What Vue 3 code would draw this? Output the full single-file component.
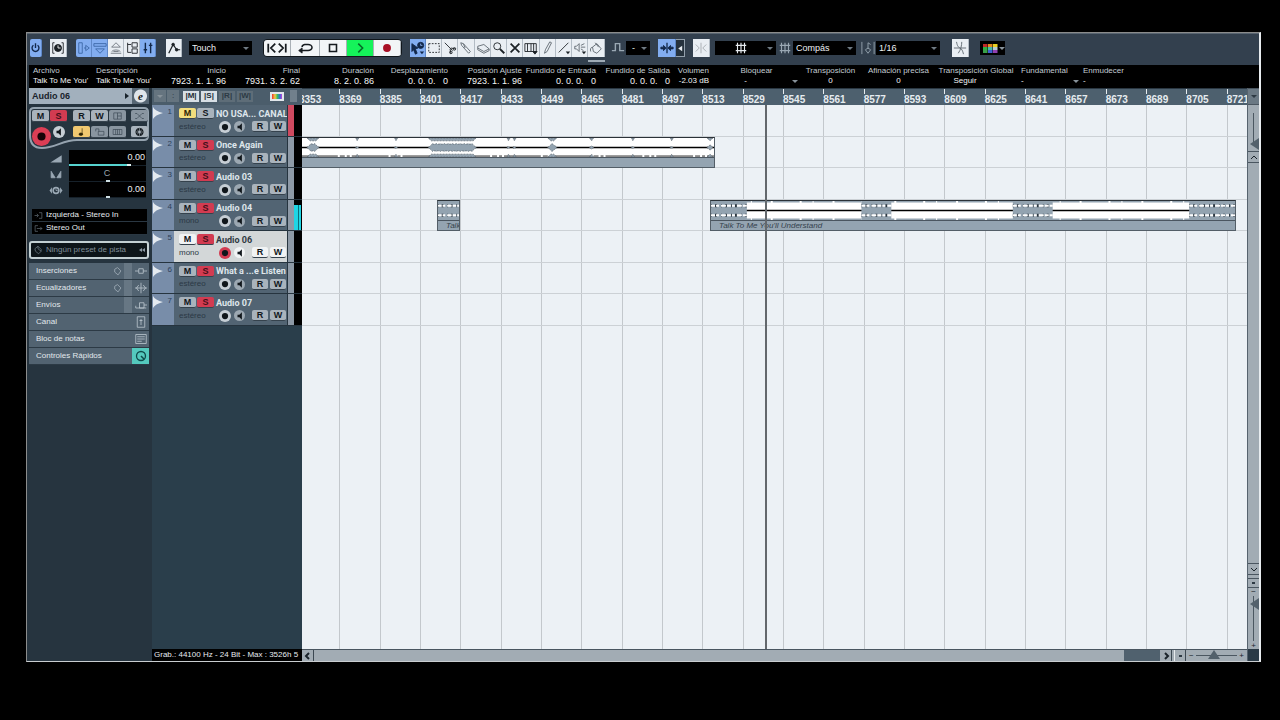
<script setup>
const icons = {
  power: '<path d="M5 4a5 5 0 1 0 6 0M8 1v7" stroke-width="2"/>',
  clock: '<path d="M4 2H2v12h2M12 2h2v12h-2"/><circle cx="8" cy="8" r="4" fill="currentColor"/><path d="M8 5v3h3" stroke="#fff"/>',
  inspector: '<path d="M2 2h4v12H2zM8 8h2M10 5v6l4-3z" stroke="#3a66a5"/>',
  infoLine: '<path d="M1 3h14v3H1zM3 9h10l-5 5z" stroke="#3a66a5"/>',
  overview: '<path d="M3 7l5-5 5 5zM3 12a6 4 0 0 1 10 0M2 14h12M5 12h6" stroke="#6b747b"/>',
  pool: '<path d="M3 2v11h4M3 4h4M8 2h6v5H8zM8 9h6v5H8z"/>',
  mixer: '<path d="M5 2v12M11 2v12M3 10h4M9 5h4" stroke-width="1.6"/>',
  automation: '<path d="M2 14L7 4l4 6h4" stroke-width="1.4"/><circle cx="7" cy="4" r="1.500" fill="currentColor"/><circle cx="11" cy="10" r="1.500" fill="currentColor"/>',
  locate: '<path d="M2 3v10M10 3L5 8l5 5M14 3l5 5-5 5M22 3v10" stroke-width="2"/>',
  loop: '<path d="M4 11h9a4 3 0 0 0 0-7H9a4 3 0 0 0-3 3" stroke-width="1.800"/><path d="M2 11l4-3v6z" fill="currentColor"/>',
  stop: '<path d="M4 4h8v8H4z" stroke-width="1.8"/>',
  play: '<path d="M6 3l5 5-5 5" stroke-width="1.8"/>',
  record: '<circle cx="8" cy="8" r="4.500" fill="#a80f25" stroke="none"/>',
  arrow: '<path d="M1 3l7 5-3 1 2 5-2 1-2-5-2 2z" fill="currentColor"/><circle cx="11" cy="5" r="3.500" fill="currentColor"/><path d="M11 3v2h2" stroke="#8ab0ee"/><path d="M10 12h5l-2.500 3z" fill="currentColor" stroke="none"/>',
  range: '<path d="M2 3h12v10H2z" stroke-dasharray="2 1.500"/>',
  split: '<path d="M2 2l9 9M9 8l5 1M8 9l1 5"/><circle cx="13" cy="9" r="1.500"/><circle cx="9" cy="13" r="1.500"/>',
  glue: '<path d="M2 2l3 1 8 9-2 2-8-9zM5 3l2 5" stroke="#5b656d"/>',
  erase: '<path d="M2 6l7-2 6 5-6 3-7-4zM2 8v2l7 4 6-3V9" stroke="#5b656d"/>',
  zoom: '<circle cx="6" cy="6" r="4"/><path d="M9 9l5 5" stroke-width="2.200"/>',
  mute: '<path d="M3 3l10 10M13 3L3 13" stroke-width="2"/>',
  comp: '<path d="M1 3h13v9H1zM4 3v9M8 3v9M11 3v9"/><path d="M10 12h5l-2.500 3z" fill="currentColor"/>',
  draw: '<path d="M10 1l2 1-5 10-3 2 1-4z" stroke="#5b656d"/>',
  line: '<path d="M2 13L13 2"/><path d="M10 12h5l-2.500 3z" fill="currentColor" stroke="none"/>',
  listen: '<path d="M2 6h2l3-3v9L4 9H2zM9 5l4-2M9 7h5M9 9l3 2" stroke="#5b656d"/><path d="M10 12h5l-2.500 3z" fill="currentColor" stroke="none"/>',
  paint: '<path d="M4 7l5-4 5 6-5 5-4-2zM4 7c-2 0-3 3-2 5M7 2l4 5" stroke="#5b656d"/>',
  zeroCross: '<path d="M1 11h4V3h5v8h5" stroke-width="1.600"/>',
  autoScroll: '<path d="M8 2v12" stroke-width="1.500"/><path d="M1 7h3V5l3 3-3 3V9H1zM15 7h-3V5L9 8l3 3V9h3z" fill="currentColor"/>',
  leftTri: '<path d="M11 3v10L4 8z" fill="currentColor" stroke="none"/>',
  snap: '<path d="M8 2v12M2 4l4 4-4 4M14 4l-4 4 4 4"/>',
  grid: '<path d="M4 2v12M8 2v12M12 2v12M2 5h12M2 11h12" stroke-width="1.300"/>',
  quant: '<path d="M1 1v14M15 1v14M8 2v7M8 2l3 2M5 10l3-2 3 2-3 4z"/>',
  cross: '<path d="M1 8h14M4 1c1 5 2 6 4 7s3 3 4 7M10 1c0 4-1 9-4 13"/>',
  monitor: '<path d="M4 6h3l4-4v12L7 10H4z" fill="currentColor" stroke="none"/>',
  dot: '<circle cx="8" cy="8" r="5" fill="currentColor" stroke="none"/>',
  note: '<path d="M9 2v9"/><ellipse cx="7" cy="11.500" rx="3" ry="2" fill="currentColor"/>',
  lock: '<path d="M6 7h9v6H6zM7 7V3H2v4"/>',
  lanes: '<path d="M1 4h14v8H1zM5 4v8M8 4v8M11 4v8"/>',
  freeze: '<circle cx="8" cy="8" r="6" fill="currentColor"/><path d="M8 2v12M2 8h12M4 4l8 8M12 4l-8 8" stroke="#a9b3bc"/><circle cx="8" cy="8" r="2" fill="#a9b3bc" stroke="none"/>',
  edit: '<path d="M2 3h12v10H2zM8 3v10M8 8h6"/>',
  fades: '<path d="M1 4h3l8 8h3M1 12h3l8-8h3"/>',
  volume: '<path d="M1 13L15 4v9z" fill="currentColor" stroke="none"/>',
  pan: '<path d="M2 4l5 8H2zM14 4L9 12h5z" fill="currentColor"/>',
  delay: '<path d="M0 8l3-4v8zM16 8l-3-4v8z" fill="currentColor" stroke="none"/><circle cx="8" cy="8" r="3.500" stroke-width="2"/><path d="M8 6v2h2"/>',
  input: '<path d="M1 8h6M5 5l3 3-3 3M9 3h5v10H9"/>',
  output: '<path d="M7 3H2v10h5M5 8h9M11 5l3 3-3 3"/>',
  preset: '<path d="M8 2l5 5v3l-4 4-5-4-1-4z"/><path d="M8 2v4l5 4"/>',
  bypass: '<path d="M8 1l6 6-5 7-6-5V4z" stroke-width="1.500"/>',
  inserts: '<path d="M0 8h5M11 8h5M5 5h6v6H5z"/>',
  eq: '<path d="M0 8h16M8 1v14M5 4L2 8l3 4M11 4l3 4-3 4"/>',
  sends: '<path d="M1 12h14M6 5h6v7H6zM1 12V9M12 8h4"/>',
  channel: '<path d="M3 1h10v14H3zM8 4v8M6 6h4"/>',
  notes: '<path d="M1 2h14v12H1zM3 5h10M3 8h10M3 11h6"/>',
  quick: '<circle cx="8" cy="8" r="6" stroke-width="1.800"/><path d="M8 8l4 4" stroke-width="2"/>'
}

const views = [
  { icon: 'inspector', label: 'Inspector', on: true },
  { icon: 'infoLine', label: 'Línea de información', on: true },
  { icon: 'overview', label: 'Vista general' },
  { icon: 'pool', label: 'Pool' },
  { icon: 'mixer', label: 'Mezclador', on: true }
]
const transport = [
  { icon: 'locate', label: 'Localizadores', cls: 'locate', box: '0 0 24 16' },
  { icon: 'loop', label: 'Ciclo', cls: 'wide', box: '0 0 20 16' },
  { icon: 'stop', label: 'Parar' },
  { icon: 'play', label: 'Reproducir', cls: 'play' },
  { icon: 'record', label: 'Grabar' }
]
const tools = ['arrow', 'range', 'split', 'glue', 'erase', 'zoom', 'mute', 'comp', 'draw', 'line', 'listen', 'paint']
const palette = ['#c02828', '#e08a20', '#e8d020', '#30b040', '#48b8a8', '#b8c8d0', '#38a048', '#4060d0', '#9040b0']

const info = [
  { label: 'Archivo', value: "Talk To Me You'", cls: 'file' },
  { label: 'Descripción', value: "Talk To Me You'", cls: 'desc' },
  { label: 'Inicio', value: '7923. 1. 1. 96', cls: 'num' },
  { label: 'Final', value: '7931. 3. 2. 62', cls: 'num' },
  { label: 'Duración', value: '8. 2. 0. 86', cls: 'num' },
  { label: 'Desplazamiento', value: '0. 0. 0.   0', cls: 'num' },
  { label: 'Posición Ajuste', value: '7923. 1. 1. 96', cls: 'num' },
  { label: 'Fundido de Entrada', value: '0. 0. 0.   0', cls: 'num' },
  { label: 'Fundido de Salida', value: '0. 0. 0.   0', cls: 'num' },
  { label: 'Volumen', value: '-2.03 dB', cls: 'vol' },
  { label: 'Bloquear', value: '-', cls: 'block', menu: true },
  { label: 'Transposición', value: '0', cls: 'transp' },
  { label: 'Afinación precisa', value: '0', cls: 'tune' },
  { label: 'Transposición Global', value: 'Seguir', cls: 'global' },
  { label: 'Fundamental', value: '-', cls: 'root', menu: true },
  { label: 'Enmudecer', value: '-', cls: 'muted' }
]

const tracks = [
  { name: 'NO USA... CANAL', mode: 'estéreo', mute: true, solo: false, tag: true },
  { name: 'Once Again', mode: 'estéreo', solo: true },
  { name: 'Audio 03', mode: 'estéreo', solo: true },
  { name: 'Audio 04', mode: 'mono', solo: true, meter: true },
  { name: 'Audio 06', mode: 'mono', solo: true, selected: true },
  { name: 'What a ...e Listen', mode: 'estéreo', solo: true },
  { name: 'Audio 07', mode: 'estéreo', solo: true }
]

const sections = [
  { name: 'Inserciones', icon: 'inserts', bypass: true, split: true },
  { name: 'Ecualizadores', icon: 'eq', bypass: true, split: true },
  { name: 'Envíos', icon: 'sends', split: true },
  { name: 'Canal', icon: 'channel' },
  { name: 'Bloc de notas', icon: 'notes' },
  { name: 'Controles Rápidos', icon: 'quick', on: true }
]

const bars = Array.from({ length: 24 }, (_, i) => 8353 + i * 16)
const SPAN = 945
const clips = [
  { row: 1, start: -2, length: 415, name: '', loud: [[6, 12], [55, 3], [94, 3], [128, 48], [207, 3], [213, 3], [248, 9], [290, 4], [332, 3], [371, 3], [408, 6]] },
  { row: 3, start: 135, length: 23, name: 'Talk To Me You\'ll Understand', loud: [[0, 23]], dense: true },
  { row: 3, start: 408, length: 526, name: 'Talk To Me You\'ll Understand', loud: [[0, 36], [151, 30], [303, 40], [480, 46]], dense: true }
]
const clipStyle = c => ({
  left: (c.start / SPAN) * 100 + '%',
  width: (c.length / SPAN) * 100 + '%',
  top: (c.row / 7) * 100 + '%'
})
function bump(c, [x, w]) {
  if (c.dense) return `M${x} 0H${x + w}V20H${x}Z`
  let top = ''
  let bottom = ''
  for (let i = 0; i <= w; i++) {
    const edge = Math.min(i, w - i, 4)
    const h = edge * 0.9 + (i % 4 ? 0 : 0.5)
    top += `L${x + i} ${10 - h}`
    bottom = `L${x + i} ${10 + h}` + bottom
  }
  const inner = Math.max(w - 6, 0)
  const side = (w - inner) / 2
  return `M${x} 10${top}${bottom}Z M${x} 0h${w}l-${side} 3h-${inner}z M${x} 20h${w}l-${side}-3h-${inner}z`
}
const dashes = (x, w) => `M${x} 5h${w}M${x} 15h${w}`
</script>

<template>
  <main class="screen">
    <div class="window">
      <header class="toolbar">
        <button class="tb slim on" aria-label="Activar proyecto"><svg viewBox="0 0 16 16" v-html="icons.power"></svg></button>
        <button class="tb clock" aria-label="Compensación de retardo"><svg viewBox="0 0 16 16" v-html="icons.clock"></svg></button>
        <div class="group views">
          <button v-for="v in views" :key="v.icon" class="tb" :class="{ on: v.on }" :aria-label="v.label"><svg viewBox="0 0 16 16" v-html="icons[v.icon]"></svg></button>
        </div>
        <button class="tb auto" aria-label="Automatización"><svg viewBox="0 0 16 16" v-html="icons.automation"></svg></button>
        <div class="pick touch"><select aria-label="Modo de automatización"><option>Touch</option></select></div>
        <div class="transport">
          <button v-for="t in transport" :key="t.icon" :class="t.cls" :aria-label="t.label"><svg :viewBox="t.box || '0 0 16 16'" v-html="icons[t.icon]"></svg></button>
        </div>
        <div class="group tools">
          <button v-for="(t, i) in tools" :key="t" class="tb" :class="{ on: i === 0, current: t === 'paint' }" :aria-label="t"><svg viewBox="0 0 16 16" v-html="icons[t]"></svg></button>
        </div>
        <svg class="deco zero" viewBox="0 0 16 16" v-html="icons.zeroCross"></svg>
        <div class="pick mini"><select aria-label="Color"><option>-</option></select></div>
        <button class="tb scroll on" aria-label="Desplazamiento automático"><svg viewBox="0 0 16 16" v-html="icons.autoScroll"></svg></button>
        <button class="tb suspend" aria-label="Suspender desplazamiento"><svg viewBox="0 0 16 16" v-html="icons.leftTri"></svg></button>
        <button class="tb snap" aria-label="Ajuste"><svg viewBox="0 0 16 16" v-html="icons.snap"></svg></button>
        <div class="pick gridtype"><svg class="deco inside" viewBox="0 0 16 16" v-html="icons.grid"></svg><select aria-label="Tipo de ajuste"><option></option></select></div>
        <svg class="deco gridicon" viewBox="0 0 16 16" v-html="icons.grid"></svg>
        <div class="pick compas"><select aria-label="Tipo de rejilla"><option>Compás</option></select></div>
        <svg class="deco quant" viewBox="0 0 16 16" v-html="icons.quant"></svg>
        <div class="pick sixteenth"><select aria-label="Cuantización"><option>1/16</option></select></div>
        <button class="tb cross" aria-label="Fundido cruzado"><svg viewBox="0 0 16 16" v-html="icons.cross"></svg></button>
        <button class="palette" aria-label="Colores">
          <svg viewBox="0 0 15 9"><rect v-for="(c, i) in palette" :key="i" :x="(i % 3) * 5" :y="Math.floor(i / 3) * 3" width="4.500" height="3" :fill="c" /></svg>
          <i class="tri"></i>
        </button>
      </header>

      <dl class="info">
        <div v-for="f in info" :key="f.label" :class="f.cls">
          <dt>{{ f.label }}</dt>
          <dd>{{ f.value }}</dd>
          <i v-if="f.menu" class="tri"></i>
        </div>
      </dl>

      <div class="work">
        <aside class="inspector">
          <div class="title">
            <h2>Audio 06</h2><i class="more"></i>
            <button aria-label="Editar canal">e</button>
          </div>
          <div class="controls">
            <svg class="outline" viewBox="0 0 120 42"><path d="M5 1H115Q119 1 119 5V29Q119 33 115 33H48C34 33 26 41 13 41Q1 41 1 28V5Q1 1 5 1Z" /></svg>
            <div class="line first">
              <button class="key">M</button><button class="key red">S</button>
              <button class="key r">R</button><button class="key">W</button>
              <button class="key dim" aria-label="Pistas"><svg viewBox="0 0 16 16" v-html="icons.edit"></svg></button>
              <button class="key dim last" aria-label="Fundidos"><svg viewBox="0 0 16 16" v-html="icons.fades"></svg></button>
            </div>
            <div class="line">
              <button class="rec" aria-label="Grabación"><svg viewBox="0 0 16 16" v-html="icons.dot"></svg></button>
              <button class="round mon" aria-label="Monitor"><svg viewBox="0 0 16 16" v-html="icons.monitor"></svg></button>
              <button class="key yellow note" aria-label="Base de tiempo"><svg viewBox="0 0 16 16" v-html="icons.note"></svg></button>
              <button class="key dim" aria-label="Bloquear"><svg viewBox="0 0 16 16" v-html="icons.lock"></svg></button>
              <button class="key dim" aria-label="Carriles"><svg viewBox="0 0 16 16" v-html="icons.lanes"></svg></button>
              <button class="key last" aria-label="Congelar"><svg viewBox="0 0 16 16" v-html="icons.freeze"></svg></button>
            </div>
          </div>
          <div class="mix">
            <svg class="deco" viewBox="0 0 16 16" v-html="icons.volume"></svg><div class="value vol">0.00</div>
            <svg class="deco" viewBox="0 0 16 16" v-html="icons.pan"></svg><div class="value center">C</div>
            <svg class="deco" viewBox="0 0 16 16" v-html="icons.delay"></svg><div class="value">0.00</div>
          </div>
          <div class="routing">
            <button><svg viewBox="0 0 16 16" v-html="icons.input"></svg>Izquierda - Stereo In</button>
            <button><svg viewBox="0 0 16 16" v-html="icons.output"></svg>Stereo Out</button>
          </div>
          <button class="preset"><svg viewBox="0 0 16 16" v-html="icons.preset"></svg><span>Ningún preset de pista</span><i></i><i></i></button>
          <ul class="sections">
            <li v-for="s in sections" :key="s.name">
              <button>
                <span>{{ s.name }}</span>
                <svg v-if="s.bypass" viewBox="0 0 16 16" v-html="icons.bypass"></svg>
                <i :class="{ lit: s.split }"></i>
                <em :class="{ on: s.on }"><svg viewBox="0 0 16 16" v-html="icons[s.icon]"></svg></em>
              </button>
            </li>
          </ul>
        </aside>

        <section class="tracks">
          <div class="thead">
            <button class="sq" aria-label="Añadir pista"><i class="tri"></i></button>
            <button class="sq" aria-label="Dividir">:</button>
            <button class="all lit m">|M|</button><button class="all lit">|S|</button>
            <button class="all">|R|</button><button class="all">|W|</button>
            <span class="rainbow"></span><span class="bar"></span>
          </div>
          <ol class="list">
            <li v-for="(t, i) in tracks" :key="t.name" :class="{ selected: t.selected }">
              <div class="strip"><svg viewBox="0 0 10 12"><path d="M0 0Q2 4 10 6Q2 8 0 12Z" /></svg><span>{{ i + 1 }}</span></div>
              <div class="body">
                <div class="line">
                  <button class="key" :class="{ yellow: t.mute }">M</button><button class="key" :class="{ red: t.solo }">S</button>
                  <strong>{{ t.name }}</strong>
                </div>
                <div class="line">
                  <span class="mode">{{ t.mode }}</span>
                  <button class="round" :class="{ armed: t.selected }" aria-label="Grabación"><svg viewBox="0 0 16 16" v-html="icons.dot"></svg></button>
                  <button class="round small" aria-label="Monitor"><svg viewBox="0 0 16 16" v-html="icons.monitor"></svg></button>
                  <button class="key r">R</button><button class="key">W</button>
                </div>
              </div>
              <div class="tag" :class="{ hot: t.tag }"></div>
              <div class="meter"><i v-if="t.meter"></i></div>
            </li>
          </ol>
          <p class="status">Grab.: 44100 Hz - 24 Bit - Max : 3526h 5</p>
        </section>

        <section class="arrange">
          <div class="ruler"><div class="cells"><span v-for="b in bars" :key="b">{{ b }}</span></div></div>
          <div class="canvas">
            <div class="cells gridlines"><span v-for="b in bars" :key="b"></span></div>
            <div class="lanes">
              <div v-for="t in tracks" :key="t.name" class="lane"></div>
              <div v-for="c in clips" :key="c.start" class="clip" :style="clipStyle(c)">
                <svg :viewBox="`0 0 ${c.length} 20`" preserveAspectRatio="none">
                  <rect :width="c.length" height="20" fill="#fff" />
                  <path v-if="c.dense" :d="`M0 0H${c.length}M0 20H${c.length}`" stroke="#94a4b1" stroke-width="3" stroke-dasharray="27 2 11 1 19 2" />
                  <path v-else :d="`M0 19H${c.length}`" stroke="#222" stroke-width="1" stroke-dasharray="37 2 5 2 3 2" />
                  <path :d="`M0 10H${c.length}`" stroke="#000" stroke-width="1.5" />
                  <path v-for="(l, i) in c.loud" :key="i" :d="bump(c, l)" fill="#93a3b0" :stroke="c.dense ? 'none' : '#4b565f'" stroke-width="0.6" stroke-dasharray="2 1" />
                  <template v-if="c.dense">
                    <g v-for="(l, i) in c.loud" :key="i">
                      <path :d="dashes(l[0], l[1])" stroke="#2c3740" stroke-width="3" stroke-dasharray="1 3 2 4" />
                      <path :d="dashes(l[0], l[1])" stroke="#fff" stroke-width="2" stroke-dasharray="4 1 3 2 5 1" />
                    </g>
                  </template>
                </svg>
                <div class="clipname">{{ c.name }}</div>
              </div>
            </div>
            <div class="playhead"></div>
          </div>
          <div class="hscroll">
            <button aria-label="Izquierda"><svg viewBox="0 0 10 10"><path d="M6 2L3 5l3 3" /></svg></button>
            <div class="thumb"></div><div class="rest"></div>
            <button aria-label="Derecha"><svg viewBox="0 0 10 10"><path d="M4 2l3 3-3 3" /></svg></button>
            <button class="presets" aria-label="Zoom horizontal"><b></b></button>
            <div class="zoomh"><span>−</span><i></i><span>+</span></div>
          </div>
        </section>

        <div class="vscroll">
          <button class="rulermenu" aria-label="Opciones de regla"><i class="tri"></i></button>
          <div class="zoomv wave"><i></i></div>
          <button aria-label="Arriba"><svg viewBox="0 0 10 10"><path d="M2 7l3-3 3 3" /></svg></button>
          <div class="vthumb"></div>
          <button aria-label="Abajo"><svg viewBox="0 0 10 10"><path d="M2 4l3 3 3-3" /></svg></button>
          <button class="dotbtn" aria-label="Zoom vertical"><b></b></button>
          <div class="zoomv rows"><span>−</span><i></i><span>+</span></div>
          <div class="corner"></div>
        </div>
      </div>
    </div>
  </main>
</template>

<style>
body { margin: 0; background: #000; }
</style>

<style scoped>
* { box-sizing: border-box; }
.screen { min-height: 100vh; padding: 32px 19px 58px 26px; display: flex; background: #000; font: 8px/10px "Liberation Sans", Arial, sans-serif; color: #e6ebef; }
.window { flex: 1; min-width: 0; display: flex; flex-direction: column; border: 1px solid #8b8c8c; border-right: 2px solid #e8ecef; border-bottom-color: #c9cdd0; background: #26333f; overflow: hidden; }
button, select { font: inherit; color: inherit; border: 0; padding: 0; margin: 0; background: none; }
ul, ol, dl, dd, p, h2 { margin: 0; padding: 0; list-style: none; }
svg { fill: none; stroke: currentColor; display: block; flex: none; }
.tri { border: 3px solid transparent; border-top: 3px solid #87929a; border-bottom: 0; }

.toolbar { height: 32px; flex: none; display: flex; align-items: center; padding: 0 0 3px 3px; background: #33404e; border-top: 1px solid #596571; }
.toolbar > * { flex: none; }
.tb { width: 16px; height: 18px; display: grid; place-items: center; background: #e9eef3; color: #1b2126; border-right: 1px solid #b3bcc5; }
.tb svg { width: 14px; height: 14px; }
.tb.on { background: #82adf0; color: #12284a; border-color: #5f88c8; }
.slim { width: 12px; border-radius: 2px; }
.slim svg { width: 11px; }
.clock { margin-left: 8px; width: 17px; }
.group { display: flex; }
.views { margin-left: 9px; border-radius: 2px; overflow: hidden; }
.auto { margin-left: 10px; }
.pick { height: 14px; background: #000; position: relative; display: flex; align-items: center; }
.pick select { width: 100%; height: 100%; appearance: none; padding-left: 3px; font-size: 9px; color: #edf1f4; }
.pick::after { content: ""; position: absolute; right: 3px; border: 3px solid transparent; border-top: 3px solid #6f7a83; border-bottom: 0; }
.touch { margin-left: 7px; width: 63px; }
.transport { margin-left: 11px; display: flex; height: 18px; border: 1px solid #11171c; border-radius: 4px; overflow: hidden; }
.transport button { width: 27px; display: grid; place-items: center; background: #f2f5f7; color: #161b1f; border-right: 1px solid #a9b0b6; }
.transport svg { width: 14px; height: 14px; }
.transport .locate svg { width: 22px; }
.transport .wide { width: 29px; }
.transport .wide svg { width: 17px; }
.transport .play { background: #15f35a; color: #066b28; }
.tools { margin-left: 8px; }
.tools .tb:nth-child(4n) { width: 17px; }
.tools .current { box-shadow: 0 3px #33404e, 0 5px #9fabb5; }
.deco { width: 14px; height: 14px; color: #9aa8b4; }
.zero { margin-left: 6px; }
.mini { margin-left: 1px; width: 24px; }
.mini select { padding-left: 6px; }
.scroll { margin-left: 8px; width: 18px; }
.suspend { width: 9px; background: #26323d; color: #e6ebef; border: 1px solid #93a0ac; border-left: 0; }
.suspend svg { width: 9px; height: 9px; }
.snap { margin-left: 8px; width: 17px; color: #a3a9ae; }
.gridtype { margin-left: 5px; width: 61px; }
.inside { position: absolute; left: 19px; color: #e6ebef; }
.gridicon { margin-left: 2px; }
.compas { margin-left: 1px; width: 63px; }
.quant { margin-left: 5px; }
.sixteenth { margin-left: 1px; width: 64px; }
.cross { margin-left: 12px; width: 17px; color: #59636b; }
.palette { margin-left: 11px; width: 25px; height: 14px; background: #000; display: flex; align-items: center; gap: 1px; padding-left: 3px; }
.palette svg { width: 15px; height: 9px; stroke: none; }

.info { height: 23px; flex: none; display: flex; margin-left: 2px; padding: 1px 0 0 4px; background: #000; overflow: hidden; white-space: pre; }
.info > div { flex: none; position: relative; text-align: right; }
.info dt { color: #c3ccd3; }
.info dd { color: #f4f6f7; }
.info .file { width: 63px; text-align: left; }
.info .desc { width: 56px; text-align: left; }
.info .num { width: 74px; }
.info .num dd { font-size: 9px; }
.info .vol { width: 39px; }
.info .block { width: 95px; text-align: center; }
.info .block dd { padding-right: 22px; }
.info .block .tri { position: absolute; right: 6px; top: 14px; }
.info .transp { width: 53px; text-align: center; }
.info .tune { width: 67px; margin-left: 8px; text-align: center; }
.info .global { width: 78px; margin-left: 5px; text-align: center; }
.info .global dd { padding-right: 22px; }
.info .root { width: 62px; margin-left: 6px; text-align: left; }
.info .root .tri { position: absolute; right: 4px; top: 14px; }
.info .muted { text-align: left; }

.work { flex: 1; display: flex; min-height: 0; }
.key { width: 17px; height: 11px; flex: none; border-radius: 2px; background: #a9b3bc; color: #10161b; font-size: 9px; line-height: 10px; font-weight: bold; text-align: center; display: grid; place-items: center; border-bottom: 1px solid #35424d; }
.key svg { width: 11px; height: 10px; }
.key.dim { background: #8995a0; color: #35424d; }
.key.red { background: #d23b51; color: #43101a; }
.key.yellow { background: #f2dd7d; color: #2d2405; }
.round { width: 12px; height: 12px; flex: none; border-radius: 50%; background: #c6ced5; color: #10161b; display: grid; place-items: center; }
.round svg { width: 10px; height: 10px; }
.round.armed { background: #d23b51; }

.inspector { width: 125px; flex: none; padding: 0 3px 0 2px; background: #26343f; }
.title { display: flex; align-items: center; height: 16px; background: #a2b0bd; color: #18222b; }
.title h2 { flex: 1; padding-left: 3px; font-size: 9px; line-height: 12px; font-weight: bold; }
.more { border: 3px solid transparent; border-left: 4px solid #18222b; border-right: 0; margin-right: 3px; }
.title button { width: 17px; height: 16px; background: radial-gradient(circle, #dfe5ea 6px, #566673 7px); font: italic bold 11px/14px "Liberation Serif", serif; color: #111; }
.controls { position: relative; height: 42px; margin: 3px 0 0; padding: 3px 3px 0; }
.outline { position: absolute; inset: 0; width: 120px; height: 42px; stroke: #95a3af; stroke-width: 2; }
.controls .line { position: relative; display: flex; align-items: center; height: 12px; gap: 1px; }
.controls .first { margin-bottom: 4px; }
.controls .r { margin-left: 5px; }
.controls .key { width: 17px; height: 12px; }
.controls .last { margin-left: 4px; }
.rec { width: 19px; height: 19px; flex: none; margin-top: 8px; border-radius: 50%; background: #dc3e55; color: #170307; display: grid; place-items: center; }
.rec svg { width: 13px; height: 13px; }
.mon { margin-left: 1px; }
.controls .note { margin-left: 7px; background: #f0c870; }
.mix { display: grid; grid-template-columns: 14px 77px; column-gap: 6px; margin: 1px 0 0 20px; align-items: center; }
.mix .deco { width: 14px; height: 13px; }
.value { height: 16px; background: #000; text-align: right; padding: 2px 1px 0 0; font-size: 9px; line-height: 10px; position: relative; color: #eef1f3; border-bottom: 1px solid #16212a; }
.value::after { content: ""; position: absolute; left: 37px; bottom: -1px; width: 4px; height: 2px; background: #cfe0e4; }
.value.vol::after { left: 0; width: 62px; background: linear-gradient(90deg, #56d3cf 58px, #e2f5f4 58px); }
.value.center { text-align: center; color: #9aa6ae; }
.routing { margin: 11px 2px 0 3px; background: #000; }
.routing button { width: 100%; height: 13px; display: flex; align-items: center; gap: 3px; padding-left: 2px; border-bottom: 1px solid #2a3742; text-align: left; }
.routing svg { width: 9px; height: 9px; color: #7b8994; }
.preset { margin-top: 6px; width: 120px; height: 18px; display: flex; align-items: center; border: 2px solid #c3d0d3; border-radius: 3px; background: #0d1519; color: #82909a; padding: 0 2px; }
.preset svg { width: 10px; height: 10px; margin-right: 3px; }
.preset span { flex: 1; text-align: left; }
.preset i { border: 2px solid transparent; border-right: 3px solid #8d9aa4; border-left: 0; }
.sections { margin-top: 4px; }
.sections li { border-bottom: 1px solid #2c3a45; }
.sections button { display: flex; width: 100%; height: 16px; align-items: center; background: #526371; color: #e2e8ec; text-align: left; }
.sections span { flex: 1; padding-left: 7px; }
.sections button > svg { width: 9px; height: 9px; margin-right: 2px; color: #9eabb5; }
.sections i { width: 8px; height: 16px; }
.sections i.lit { background: #677784; }
.sections em { width: 17px; height: 16px; display: grid; place-items: center; color: #c2ccd4; }
.sections em.on { background: #54c9bd; color: #0f4b4a; }
.sections em svg { width: 12px; height: 12px; }

.tracks { width: 150px; flex: none; display: flex; flex-direction: column; background: #2a3e4b; }
.thead { height: 17px; flex: none; display: flex; align-items: center; gap: 1px; padding: 0 0 1px 2px; background: #4b5d6b; }
.sq { width: 12px; height: 12px; display: grid; place-items: center; background: #65747f; color: #25313a; }
.all { width: 16px; height: 11px; font-weight: bold; font-size: 8px; background: #5e6d78; color: #2c3a45; }
.all.m { margin-left: 3px; }
.all.lit { background: #d8dfe5; color: #222d36; }
.all + .all { margin-left: 1px; }
.rainbow { width: 14px; height: 9px; margin-left: 16px; border: 2px solid #e2e7eb; background: linear-gradient(90deg, #e33, #ec4 30%, #3b6 55%, #36d 80%, #c4c); }
.bar { width: 7px; height: 12px; margin-left: 5px; background: #71808c; }
.list { height: 221px; flex: none; display: grid; grid-template-rows: repeat(7, 1fr); }
.list li { display: flex; min-height: 0; border-bottom: 1px solid #26343f; }
.strip { width: 22px; flex: none; display: flex; justify-content: space-between; background: #788da9; color: #2e4159; padding: 2px 2px 0 1px; }
.strip svg { width: 10px; height: 12px; fill: #e4eaf0; stroke: none; }
.body { width: 113px; flex: none; overflow: hidden; background: #526473; padding: 3px 0 0 5px; }
.body .line { display: flex; align-items: center; height: 11px; gap: 1px; white-space: nowrap; }
.body .line + .line { margin-top: 2px; }
.body strong { margin-left: 1px; font-family: Roboto, "Liberation Sans", sans-serif; font-size: 9px; color: #dfe6eb; }
.mode { width: 39px; color: #2b3945; }
.body .small { margin-left: 2px; width: 11px; height: 11px; background: #9ca8b2; }
.body .line + .line .key { width: 16px; margin-left: 1px; }
.body .line + .line .r { margin-left: 6px; }
.selected .body { background: #d3d7d8; }
.selected strong { color: #2f3a42; }
.selected .key:not(.red), .selected .small { background: #f1f3f4; }
.tag { width: 7px; flex: none; background: #8d99a6; border-left: 1px solid #26343f; }
.tag.hot { background: #cf4a60; }
.meter { flex: 1; background: #000; padding: 5px 1px 0 0; }
.meter i { display: block; height: 100%; background: linear-gradient(90deg, #1fd6e4 4px, #0a6f78 4px 5px, #1fd6e4 5px); }
.status { margin-top: auto; height: 12px; background: #000; padding: 1px 0 0 2px; white-space: nowrap; overflow: hidden; }

.arrange { flex: 1; min-width: 0; display: flex; flex-direction: column; }
.ruler { height: 17px; flex: none; overflow: hidden; background: #4d606e; border-top: 1px solid #2a3742; }
.cells { display: grid; grid-template-columns: repeat(24, 1fr); margin: 0 -20px 0 -3px; }
.ruler span { font-size: 10px; line-height: 11px; font-weight: bold; color: #e6ecf0; padding-top: 5px; background: linear-gradient(#e6ecf0, #e6ecf0) no-repeat 0 0 / 1px 5px; }
.canvas { flex: 1; min-height: 0; position: relative; overflow: hidden; background: #ecf1f5; }
.gridlines { position: absolute; inset: 0; }
.gridlines span { border-left: 1px solid #c3c8cc; }
.lanes { position: relative; height: 221px; display: grid; grid-template-rows: repeat(7, 1fr); }
.lane { border-bottom: 1px solid #ccd1d5; }
.clip { position: absolute; height: 31px; border: 1px solid #535e67; border-top-color: #2b3238; background: #94a4b1; overflow: hidden; }
.clip svg { width: 100%; height: 19px; stroke: none; }
.clipname { height: 11px; padding-left: 8px; border-top: 1px solid #4b5660; font-style: italic; line-height: 9px; color: #35424d; white-space: nowrap; }
.playhead { position: absolute; top: 0; bottom: 0; left: 49%; width: 2px; background: #63686c; }
.hscroll { height: 12px; flex: none; display: flex; background: #a2acb4; color: #1b242b; border-top: 1px solid #49555f; }
.hscroll button { width: 12px; display: grid; place-items: center; border-right: 1px solid #3c4852; }
.hscroll svg { width: 10px; height: 10px; stroke-width: 2; }
.thumb { flex: 1; background: #a2acb4; }
.rest { width: 36px; background: #50616e; }
.hscroll .presets { width: 12px; margin-left: 2px; border-left: 1px solid #e8ecef; }
.presets b, .dotbtn b { width: 3px; height: 2px; background: #2d3943; }
.zoomh { width: 61px; display: flex; align-items: center; gap: 2px; padding: 0 3px; }
.zoomh i { flex: 1; height: 1px; background: #4b5761; position: relative; }
.zoomh i::after { content: ""; position: absolute; left: 12px; top: -5px; border: 6px solid transparent; border-bottom: 9px solid #53616c; border-top: 0; }

.vscroll { width: 12px; flex: none; display: flex; flex-direction: column; background: #a2acb4; color: #1b242b; border-left: 1px solid #56636e; }
.vscroll button { height: 12px; flex: none; display: grid; place-items: center; border: 1px solid #4a5660; border-width: 1px 0; }
.vscroll button svg { width: 10px; height: 10px; }
.vscroll .rulermenu { height: 17px; background: #6b7984; }
.rulermenu .tri { border-top-color: #2d3943; }
.zoomv { position: relative; flex: none; display: flex; flex-direction: column; align-items: center; justify-content: space-between; line-height: 7px; background: linear-gradient(#4b5761, #4b5761) no-repeat center / 1px calc(100% - 16px); }
.zoomv i { position: absolute; right: 0; border: 6px solid transparent; border-right: 9px solid #53616c; border-left: 0; }
.wave { height: 46px; }
.wave i { bottom: 1px; }
.vthumb { flex: 1; }
.vscroll .dotbtn { margin-top: 3px; height: 10px; }
.rows { height: 61px; }
.rows i { top: 10px; }
.corner { height: 12px; flex: none; background: #2a3a46; }
</style>
